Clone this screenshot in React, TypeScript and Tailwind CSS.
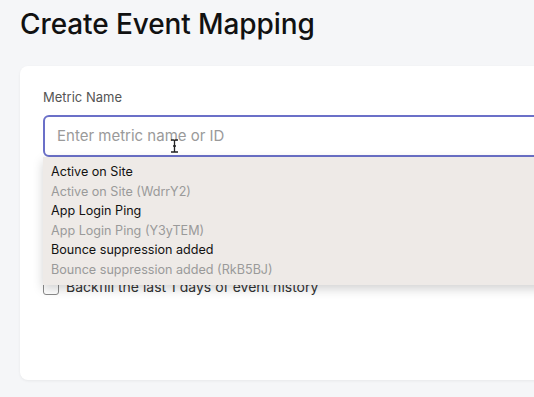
const metrics = [
  { name: "Active on Site", id: "WdrrY2" },
  { name: "App Login Ping", id: "Y3yTEM" },
  { name: "Bounce suppression added", id: "RkB5BJ" },
];

function IBeam() {
  return (
    <svg
      className="absolute left-[127px] top-[24px]"
      width="9"
      height="14"
      viewBox="0 0 9 14"
      fill="none"
      stroke="#222"
      strokeWidth="1.3"
    >
      <path d="M1 1h2.5c.6 0 1 .4 1 1v10c0 .6-.4 1-1 1H1M8 1H5.5c-.6 0-1 .4-1 1M8 13H5.5c-.6 0-1-.4-1-1M3 7h3" />
    </svg>
  );
}

export default function App() {
  return (
    <div
      className="w-[534px] h-[397px] overflow-hidden bg-[#f5f6f8]"
      style={{ fontFamily: "Inter, 'Noto Sans', sans-serif" }}
    >
      <h1 className="pl-[20px] pt-[6px] h-[66px] text-[28px] leading-[36px] font-medium tracking-[-0.1px] text-[#111]">
        Create Event Mapping
      </h1>
      <div className="ml-[20px] w-[560px] h-[314px] rounded-lg bg-white shadow-[0_1px_3px_rgba(0,0,0,0.06)] pl-[23px] pt-[22px]">
        <label className="block text-[13px] leading-[18px] text-[#555]">
          Metric Name
        </label>
        <div className="relative mt-[9px]">
          <div className="h-[42px] rounded-md border-2 border-[#6b70c8] flex items-center pl-[12px] text-[15px] text-[#9a9a9a]">
            Enter metric name or ID
          </div>
          <IBeam />
          <div className="absolute left-0 right-0 top-[42px] h-[128px] z-10 bg-[#eeeae7] shadow-[0_4px_10px_rgba(0,0,0,0.18)] pt-[5px] pl-[8px] text-[12.6px] leading-[19.6px]">
            {metrics.map((m) => (
              <div key={m.id}>
                <div className="text-[#111]">{m.name}</div>
                <div className="text-[#9a9a9a]">
                  {m.name} ({m.id})
                </div>
              </div>
            ))}
          </div>
          <div className="mt-[119px] flex items-center gap-[7px]">
            <span className="w-[16px] h-[16px] rounded-[3px] border border-[#8a8a8a] bg-white" />
            <span className="text-[14px] text-[#333]">
              Backfill the last 1 days of event history
            </span>
          </div>
        </div>
      </div>
    </div>
  );
}
